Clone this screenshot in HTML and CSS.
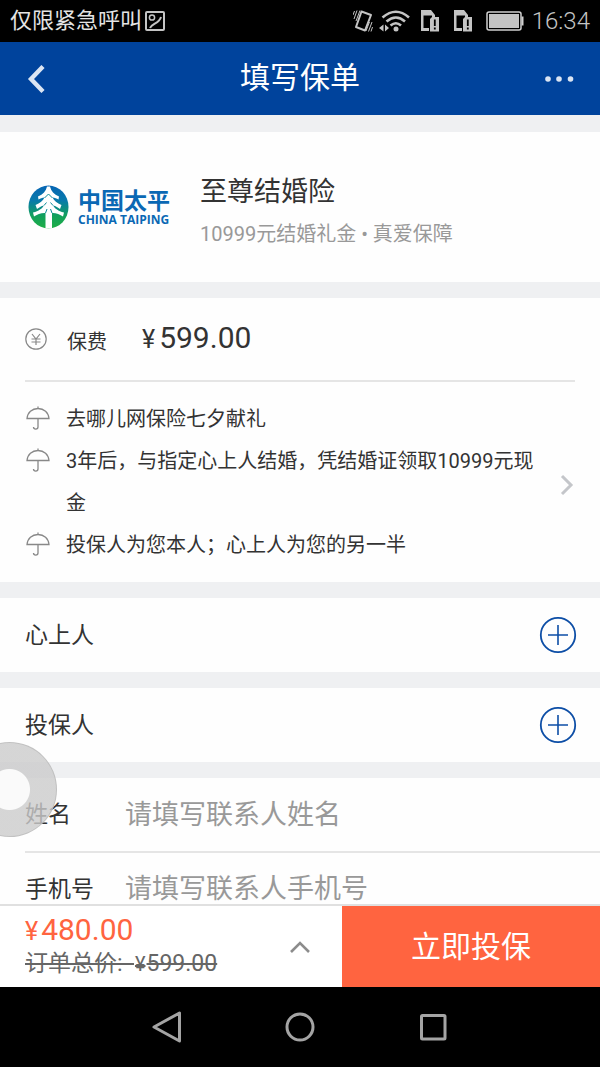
FILE: index.html
```html
<!DOCTYPE html>
<html lang="zh-CN">
<head>
<meta charset="utf-8">
<meta name="viewport" content="width=device-width, initial-scale=1">
<title>填写保单</title>
<link rel="stylesheet" href="styles.css">
</head>
<body>
<svg class="defs" aria-hidden="true">
  <symbol id="umbrella" viewBox="0 0 24 24"><path d="M1 12.500C1.500 6.500 6 2.500 12 2.500S22.500 6.500 23 12.500ZM12 .5v2M12 12.500v8.500c0 2.800-4.500 2.800-4.500 0" fill="none" stroke="#888" stroke-width="1.300"/></symbol>
  <symbol id="plus" viewBox="0 0 38 38"><circle cx="19" cy="19" r="17.200" fill="none" stroke="#0d4ea6" stroke-width="1.800"/><path d="M9 19h20M19 9v20" stroke="#0d4ea6" stroke-width="1.600"/></symbol>
  <symbol id="sim" viewBox="0 0 20 22"><path d="M1 0h10l4 5v3h-3V5.500H3.500v12.500H9v3H1Z" fill="#c4c4c4"/><path d="M10 9l2-2h7v14.500h-9Z" fill="#c4c4c4"/><path d="M14.800 9.500v6.500M14.800 17.500v2" stroke="#000" stroke-width="1.800"/></symbol>
</svg>

<div class="status">
  <span class="carrier">仅限紧急呼叫</span>
  <svg class="shot" viewBox="0 0 20 20"><rect x="1" y="1" width="18" height="18" rx="1" fill="none" stroke="#c4c4c4" stroke-width="2"/><circle cx="7" cy="6.500" r="2.600" fill="none" stroke="#c4c4c4" stroke-width="1.500"/><path d="M5 17c2-5 9-4 11-11" fill="none" stroke="#c4c4c4" stroke-width="2"/></svg>
  <div class="indicators">
    <svg width="20" height="22" viewBox="0 0 20 22"><path d="M8.500 1.500 18 5 12 20.500 3 17Z" fill="none" stroke="#c4c4c4" stroke-width="2" stroke-linejoin="round"/><path d="M4 .5 1 9M1.500 1 0 5M7 .5 3 11M19 12l-3.500 9.500M16.500 12 13 21M19.500 17 18 21.500" stroke="#c4c4c4" stroke-width="1"/></svg>
    <svg width="31" height="22" viewBox="0 0 31 22"><g fill="none" stroke="#c4c4c4" stroke-width="2.600"><path d="M3.500 7.500Q17 -4 30 7.500M7.500 11.500Q17 3.500 26 11.500M11.500 15.500Q17 11 22 15.500"/></g><circle cx="17" cy="19" r="2.500" fill="#c4c4c4"/><path d="M4.500 14.500v7L0 18ZM6 14.500v7l4-3.500Z" fill="#c4c4c4"/></svg>
    <svg class="sim" viewBox="0 0 20 22"><use href="#sim"/></svg>
    <svg class="sim" viewBox="0 0 20 22"><use href="#sim"/></svg>
    <svg width="38" height="20" viewBox="0 0 38 20"><rect x="1" y="1" width="34" height="18" rx="2" fill="none" stroke="#d0d0d0" stroke-width="1.500"/><rect x="3" y="3" width="30" height="14" fill="#c4c4c4"/><path d="M35.500 5.500h2v9h-2Z" fill="#d0d0d0"/></svg>
  </div>
  <time class="clock">16:34</time>
</div>

<header class="titlebar">
  <button class="back" aria-label="返回"><svg width="20" height="28" viewBox="0 0 20 28"><path d="M17 1.500 5 14l12 12.500" fill="none" stroke="#dbe5f3" stroke-width="4.400"/></svg></button>
  <h1>填写保单</h1>
  <button class="more" aria-label="更多"><svg width="30" height="8" viewBox="0 0 30 8"><g fill="#dbe5f3"><circle cx="4" cy="4" r="2.800"/><circle cx="15" cy="4" r="2.800"/><circle cx="26.500" cy="4" r="2.800"/></g></svg></button>
</header>

<main class="content">
  <section class="product">
    <div class="brand">
      <svg width="41" height="44" viewBox="0 0 41 44">
        <defs><linearGradient id="sky" x1="0" y1="0" x2="0" y2="1"><stop offset="0" stop-color="#0664b4"/><stop offset=".35" stop-color="#087aab"/><stop offset=".7" stop-color="#12a05c"/><stop offset="1" stop-color="#1fae45"/></linearGradient></defs>
        <ellipse cx="20.500" cy="22" rx="20" ry="21.500" fill="url(#sky)"/>
        <path d="M17.500 43.500V28C14 27.500 9 29.500 6 31.500L5 27.500C11 26 14 23.500 16 20.500C13 21 11 22.500 9 24L7.500 20C12 18.500 15 15.500 16.500 12.500C14 12.500 12.500 13.500 10.500 14.500L10 11.500C15 9.500 18 6 19 1.500H22C23 6 26 9.500 31 11.500L30.500 14.500C28.500 13.500 27 12.500 24.500 12.500C26 15.500 29 18.500 33.500 20L32 24C30 22.500 28 21 25 20.500C27 23.500 30 26 36 27.500L35 31.500C32 29.500 27 27.500 24 28V43.500Z" fill="#fff"/>
        <path d="m20.500 9-4 4M20.500 9l4 4M16 20.500l2.500-3M25 20.500l-2.500-3M17.500 28l1.500-4M24 28l-1.500-4" stroke="#0a8c98" stroke-width="1"/>
      </svg>
      <div class="brandname"><strong>中国太平</strong><span>CHINA TAIPING</span></div>
    </div>
    <div class="about"><h2>至尊结婚险</h2><p>10999元结婚礼金 • 真爱保障</p></div>
  </section>

  <section class="plan">
    <div class="fee">
      <svg width="22" height="22" viewBox="0 0 22 22"><circle cx="11" cy="11" r="10.200" fill="none" stroke="#888" stroke-width="1.200"/><path d="m7 6 4 5 4-5M6.500 11h9M6.500 14h9M11 11v6" fill="none" stroke="#888" stroke-width="1.200"/></svg>
      <span class="feelabel">保费</span>
      <span class="amount"><small>¥</small>599.00</span>
    </div>
    <div class="details">
      <ul>
        <li><svg viewBox="0 0 24 24"><use href="#umbrella"/></svg><span>去哪儿网保险七夕献礼</span></li>
        <li><svg viewBox="0 0 24 24"><use href="#umbrella"/></svg><span>3年后，与指定心上人结婚，凭结婚证领取10999元现金</span></li>
        <li><svg viewBox="0 0 24 24"><use href="#umbrella"/></svg><span>投保人为您本人；心上人为您的另一半</span></li>
      </ul>
      <svg class="chevron" width="14" height="22" viewBox="0 0 14 22"><path d="m2 2 9 9-9 9" fill="none" stroke="#c4c6ca" stroke-width="3"/></svg>
    </div>
  </section>

  <section class="person"><h3>心上人</h3><button aria-label="添加心上人"><svg viewBox="0 0 38 38"><use href="#plus"/></svg></button></section>
  <section class="person"><h3>投保人</h3><button aria-label="添加投保人"><svg viewBox="0 0 38 38"><use href="#plus"/></svg></button></section>

  <form class="contact">
    <div class="field"><label for="name">姓名</label><input id="name" type="text" placeholder="请填写联系人姓名"></div>
    <div class="field"><label for="phone">手机号</label><input id="phone" type="tel" placeholder="请填写联系人手机号"></div>
  </form>
</main>

<footer class="checkout">
  <div class="total">
    <div class="prices"><span class="now"><small>¥</small>480.00</span><del>订单总价:&nbsp; <small>¥</small>599.00</del></div>
    <button class="expand" aria-label="展开明细"><svg width="20" height="12" viewBox="0 0 20 12"><path d="m1 11 9-9 9 9" fill="none" stroke="#8c8c8c" stroke-width="2.600"/></svg></button>
  </div>
  <button class="buy">立即投保</button>
</footer>

<nav class="keys">
  <button aria-label="后退"><svg width="32" height="32" viewBox="0 0 32 32"><path d="M28.500 2v28L3 16Z" fill="none" stroke="#a4a4a4" stroke-width="3" stroke-linejoin="round"/></svg></button>
  <button aria-label="主页"><svg width="32" height="32" viewBox="0 0 32 32"><circle cx="16" cy="16" r="13" fill="none" stroke="#a4a4a4" stroke-width="3"/></svg></button>
  <button aria-label="最近任务"><svg width="32" height="32" viewBox="0 0 32 32"><rect x="4.500" y="4.500" width="23.500" height="23.500" rx="1" fill="none" stroke="#a4a4a4" stroke-width="3"/></svg></button>
</nav>
<button class="ball" aria-label="悬浮按钮"></button>
</body>
</html>
```
FILE: styles.css
```css
* { box-sizing: border-box; }
body {
  position: relative;
  display: flex;
  flex-direction: column;
  height: 100vh;
  margin: 0;
  overflow: hidden;
  background: #eff0f2;
  color: #333;
  font-family: Roboto, "Noto Sans CJK SC", sans-serif;
  font-size: 20px;
}
h1, h2, h3, p, ul { margin: 0; padding: 0; font-weight: 400; }
button { padding: 0; border: 0; background: none; font: inherit; cursor: pointer; }
svg { display: block; flex: none; }
.defs { position: absolute; width: 0; height: 0; }

.status {
  flex: none;
  display: flex;
  align-items: center;
  height: 42px;
  padding: 0 10px;
  background: #000;
  color: #e4e4e4;
}
.carrier { font-size: 22px; line-height: 42px; }
.shot { width: 20px; height: 20px; margin-left: 3px; }
.indicators { display: flex; align-items: center; gap: 10px; margin-left: auto; }
.indicators svg:first-child { margin-right: -4px; }
.sim { width: 20px; height: 22px; margin-right: 3px; }
.clock { margin-left: 8px; color: #c4c4c4; font-size: 24px; font-weight: 300; }

.titlebar {
  flex: none;
  display: grid;
  grid-template-columns: 1fr auto 1fr;
  align-items: center;
  height: 73px;
  padding: 0 26px;
  background: #00439c;
  color: #fff;
}
.titlebar h1 { font-size: 30px; line-height: 40px; padding-bottom: 2px; }
.back { justify-self: start; }
.more { justify-self: end; }

.content {
  flex: 1;
  min-height: 0;
  overflow: hidden;
  display: flex;
  flex-direction: column;
  gap: 16px;
  padding-top: 17px;
}
.content > * { flex: none; background: #fefefe; }

.product { display: flex; align-items: center; height: 150px; padding: 0 25px; }
.brand { display: flex; align-items: center; gap: 9px; width: 175px; padding-left: 3px; }
.brandname { display: flex; flex-direction: column; color: #0a68b4; white-space: nowrap; }
.brandname strong { font-size: 23px; line-height: 25px; }
.brandname span { font-family: "Open Sans", sans-serif; font-size: 12px; font-weight: 700; line-height: 12px; }
.about { padding-top: 8px; }
.about h2 { font-size: 27px; line-height: 46px; }
.about p { color: #999; font-size: 20px; line-height: 38px; }

.fee {
  display: flex;
  align-items: center;
  height: 84px;
  margin: 0 25px;
  border-bottom: 2px solid #e5e5e5;
}
.feelabel { width: 75px; margin-left: 20px; padding-top: 3px; }
.amount { padding-bottom: 3px; font-size: 30px; }
.amount small { margin-right: 4px; font-size: 25px; }
.details { display: flex; align-items: center; padding: 16px 25px; }
.details ul { flex: 1; list-style: none; }
.details li { display: flex; gap: 16px; padding-left: 1px; line-height: 42px; }
.details li svg { width: 24px; height: 24px; margin-top: 8px; }
.chevron { margin: 6px 1px 0 19px; }

.person {
  display: flex;
  align-items: center;
  justify-content: space-between;
  height: 74px;
  padding: 0 23px 0 25px;
}
.person h3 { padding-bottom: 4px; font-size: 23px; }
.person svg { width: 38px; height: 38px; }

.contact { padding-left: 25px; }
.field { display: flex; align-items: center; height: 74px; }
.field:first-child { height: 73px; }
.field + .field { border-top: 2px solid #e5e5e5; }
.field label { width: 100px; padding-bottom: 5px; font-size: 23px; }
.field input {
  flex: 1;
  min-width: 0;
  padding: 0;
  border: 0;
  background: none;
  color: #333;
  font: inherit;
  font-size: 27px;
}
.field input::placeholder { color: #999; opacity: 1; }

.checkout {
  flex: none;
  display: grid;
  grid-template-columns: 57fr 43fr;
  height: 83px;
  border-top: 2px solid #e0e0e0;
  background: #fff;
}
.total { display: flex; align-items: center; justify-content: space-between; padding: 0 32px 0 25px; }
.prices { display: flex; flex-direction: column; padding-bottom: 3px; }
.now { color: #ff6440; font-size: 30px; line-height: 36px; }
.now small { margin-right: 3px; font-size: 25px; }
.prices del { color: #666; font-size: 23px; line-height: 27px; white-space: nowrap; }
.prices del small { padding: 0 1px; font-size: 20px; }
.buy { padding-bottom: 6px; background: #ff6440; color: #fff; font-size: 30px; }

.keys {
  flex: none;
  display: flex;
  align-items: center;
  justify-content: center;
  gap: 101px;
  height: 80px;
  background: #000;
}

.ball {
  position: absolute;
  top: 742px;
  left: -38px;
  width: 95px;
  height: 95px;
  border: 1px solid rgba(180, 180, 180, 0.6);
  border-radius: 50%;
  background: radial-gradient(circle, #fafafa 20px, rgba(203, 203, 203, 0.8) 21px);
}
```
